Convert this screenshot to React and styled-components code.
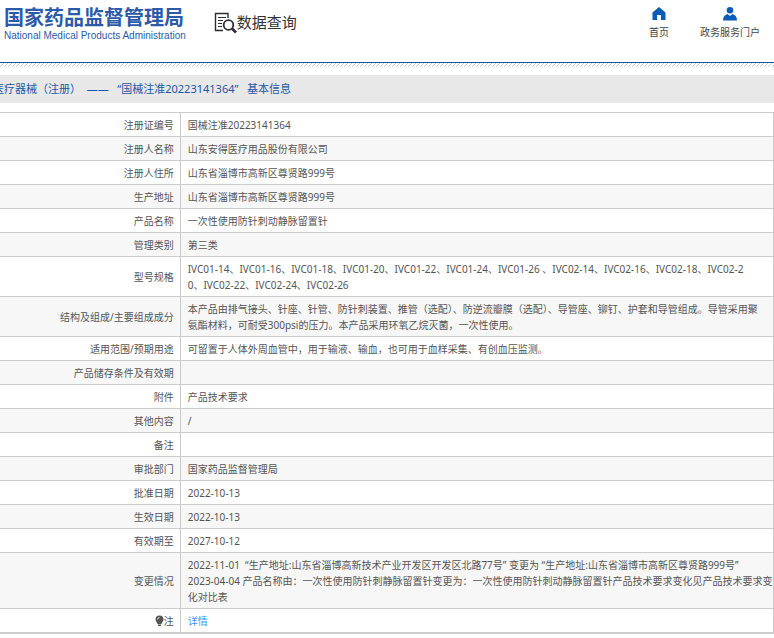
import styled, { createGlobalStyle } from "styled-components";

const GlobalStyle = createGlobalStyle`
  body {
    margin: 0;
    background-color: white;
    color: #555;
    font-family: "Noto Sans", "Noto Sans CJK SC", sans-serif;
    font-size: 10px;
    line-height: 16px;
  }
`;

const Header = styled.header`
  display: flex;
  align-items: flex-start;
  padding: 6px 14px 18px 4px;
  border-bottom: 1px solid #14589c;
`;

const Logo = styled.a`
  color: #2b5ba8;
  text-decoration: none;
`;

const LogoName = styled.div`
  font-family: "Noto Sans CJK SC", sans-serif;
  font-size: 20px;
  line-height: 22px;
  font-weight: bold;
`;

const LogoSubName = styled.div`
  font-family: "Liberation Sans", sans-serif;
  font-size: 10px;
  line-height: 16px;
`;

const Search = styled.a`
  display: flex;
  align-items: center;
  margin-left: 28px;
  padding-top: 4px;
  color: #333;
  font-family: "Noto Sans CJK SC", sans-serif;
  font-size: 15px;
  line-height: 24px;
  text-decoration: none;
`;

const Nav = styled.nav`
  display: flex;
  gap: 31px;
  margin-left: auto;
`;

const NavLink = styled.a`
  display: flex;
  flex-direction: column;
  align-items: center;
  gap: 3px;
  color: #444;
  text-decoration: none;
`;

const Stripes = styled.svg`
  display: block;
  width: 100%;
  height: 4px;
  margin-bottom: 8px;
`;

const Title = styled.h1`
  margin: 0 0 9px;
  padding: 6px 0;
  background-color: #e8e8e8;
  color: #1a57a8;
  font-size: 11px;
  line-height: 16px;
  font-weight: normal;
  text-indent: -7px;
  white-space: nowrap;
`;

const InfoTable = styled.table`
  width: 100%;
  border-collapse: collapse;
  border-right: 1px solid #ccc;
  border-bottom: 2px solid #ccc;
`;

const Row = styled.tr`
  border-top: 1px solid #ccc;

  &:nth-child(even) {
    background-color: #f7f7f7;
  }
`;

const Label = styled.th`
  width: 23.3%;
  padding: 4px 6px 3px 0;
  border-right: 1px solid #ccc;
  font-weight: normal;
  text-align: right;
`;

const Value = styled.td`
  padding: 4px 0 3px 7px;
  word-break: break-all;
  white-space: pre-line;
`;

const DetailLink = styled.a`
  color: #3d94f0;
  text-decoration: none;
`;

const BulbIcon = styled.svg`
  vertical-align: -2px;
`;

const rows = [
  ["注册证编号", "国械注准20223141364"],
  ["注册人名称", "山东安得医疗用品股份有限公司"],
  ["注册人住所", "山东省淄博市高新区尊贤路999号"],
  ["生产地址", "山东省淄博市高新区尊贤路999号"],
  ["产品名称", "一次性使用防针刺动静脉留置针"],
  ["管理类别", "第三类"],
  [
    "型号规格",
    "IVC01-14、IVC01-16、IVC01-18、IVC01-20、IVC01-22、IVC01-24、IVC01-26 、IVC02-14、IVC02-16、IVC02-18、IVC02-2\n0、IVC02-22、IVC02-24、IVC02-26",
  ],
  [
    "结构及组成/主要组成成分",
    "本产品由排气接头、针座、针管、防针刺装置、推管（选配）、防逆流瓣膜（选配）、导管座、铆钉、护套和导管组成。导管采用聚\n氨酯材料，可耐受300psi的压力。本产品采用环氧乙烷灭菌，一次性使用。",
  ],
  [
    "适用范围/预期用途",
    "可留置于人体外周血管中，用于输液、输血，也可用于血样采集、有创血压监测。",
  ],
  ["产品储存条件及有效期", ""],
  ["附件", "产品技术要求"],
  ["其他内容", "/"],
  ["备注", ""],
  ["审批部门", "国家药品监督管理局"],
  ["批准日期", "2022-10-13"],
  ["生效日期", "2022-10-13"],
  ["有效期至", "2027-10-12"],
  [
    "变更情况",
    "2022-11-01 \u00a0“生产地址:山东省淄博高新技术产业开发区开发区北路77号” 变更为 “生产地址:山东省淄博市高新区尊贤路999号”\n2023-04-04 产品名称由：一次性使用防针刺静脉留置针变更为：一次性使用防针刺动静脉留置针产品技术要求变化见产品技术要求变\n化对比表",
  ],
];

const SearchIcon = () => (
  <svg width="23" height="24" viewBox="0 0 23 24" fill="none" stroke="#2d2d3a">
    <path d="M14 8V3.500H1.500v17H9" strokeWidth="1.4" />
    <path d="M4 7.500h8M4 10.500h5M4 13.500h4M4 16.500h4" strokeWidth="1.2" />
    <circle cx="14.500" cy="15" r="4.800" strokeWidth="1.8" />
    <path d="M18 18.500l4 4" strokeWidth="2.6" />
  </svg>
);

const HomeIcon = () => (
  <svg width="14" height="15" viewBox="0 0 14 15" fill="#0b5bbb">
    <path d="M7 1L0.500 6.500V14H5V9h4v5h4.500V6.500z" />
  </svg>
);

const UserIcon = () => (
  <svg width="14" height="15" viewBox="0 0 14 15" fill="#0b5bbb">
    <circle cx="7" cy="4.200" r="3.300" />
    <path d="M0 14.500c0-3.500 1.500-5.500 4.500-6.500L7 10l2.500-2c3 1 4.500 3 4.500 6.500z" />
  </svg>
);

const App = () => {
  return (
    <>
      <GlobalStyle />
      <Header>
        <Logo href="#">
          <LogoName>国家药品监督管理局</LogoName>
          <LogoSubName>National Medical Products Administration</LogoSubName>
        </Logo>
        <Search href="#search">
          <SearchIcon />
          数据查询
        </Search>
        <Nav>
          <NavLink href="#home">
            <HomeIcon />
            首页
          </NavLink>
          <NavLink href="#portal">
            <UserIcon />
            政务服务门户
          </NavLink>
        </Nav>
      </Header>
      <Stripes aria-hidden="true">
        <defs>
          <pattern id="stripe" width="4" height="4" patternUnits="userSpaceOnUse">
            <path d="M0 4L4 0" stroke="#c3d3dc" strokeWidth="1" />
          </pattern>
        </defs>
        <rect width="100%" height="4" fill="url(#stripe)" />
      </Stripes>
      <main>
        <Title>
          医疗器械（注册）&nbsp; —— &nbsp;&nbsp;“国械注准20223141364”
          &nbsp;&nbsp;基本信息
        </Title>
        <InfoTable>
          <tbody>
            {rows.map(([label, value]) => (
              <Row key={label}>
                <Label scope="row">{label}</Label>
                <Value>{value}</Value>
              </Row>
            ))}
            <Row>
              <Label scope="row">
                <BulbIcon width="9" height="12" viewBox="0 0 9 12">
                  <path
                    d="M4.500 0.500a4 4 0 0 1 4 4c0 2-1.500 2.700-2 4.500h-4c-.5-1.800-2-2.500-2-4.500a4 4 0 0 1 4-4zM3 9.500h3v1.500H3z"
                    fill="#555"
                  />
                  <path d="M2.500 4.500a2 2 0 0 1 2-2" stroke="#ddd" fill="none" />
                </BulbIcon>
                注
              </Label>
              <Value>
                <DetailLink href="#detail">详情</DetailLink>
              </Value>
            </Row>
          </tbody>
        </InfoTable>
      </main>
    </>
  );
};

export default App;
